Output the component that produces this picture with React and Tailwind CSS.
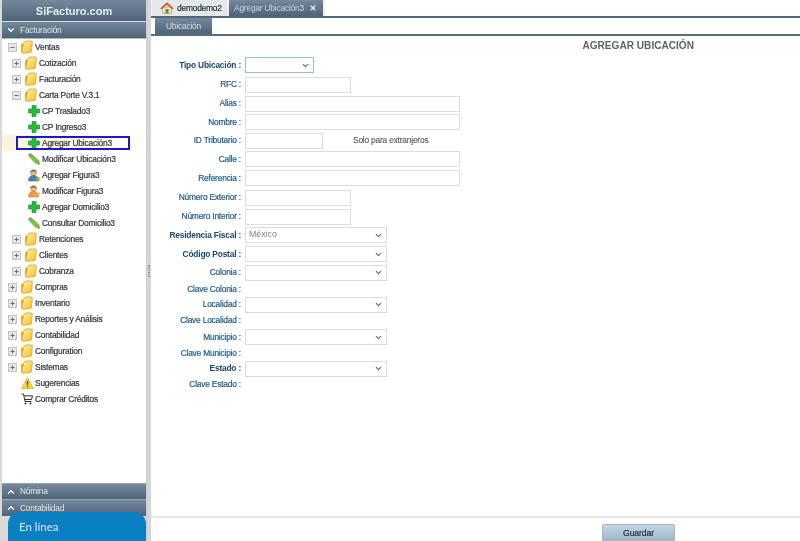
import React from 'react';
import { ChevronDown, ChevronUp, X } from 'lucide-react';

const Folder = () => (
    <svg width="13" height="14" viewBox="0 0 13 14" className="shrink-0">
        <defs>
            <linearGradient id="folderFill" x1="0" y1="0" x2="1" y2="1">
                <stop offset="0" stopColor="#fff1a8" />
                <stop offset="1" stopColor="#f0c030" />
            </linearGradient>
        </defs>
        <path d="M1 4.5 L5 2.5 L5.5 12.5 L1.5 13 Z" fill="#d9a520" />
        <path d="M3.5 3.5 Q4 1 6 1 L11.5 1 Q12.5 1 12.3 2.5 L11.5 11 Q11.3 12.5 10 12.7 L2.5 13.2 Q1.4 13.2 1.6 12 Z" fill="url(#folderFill)" stroke="#d9a520" strokeWidth="0.8" />
    </svg>
);

const Toggle = ({ open }) => (
    <svg width="9" height="9" viewBox="0 0 9 9" className="shrink-0">
        <rect x="0.5" y="0.5" width="8" height="8" fill="#e4e6e9" stroke="#bcc2c8" />
        <path d={open ? 'M2.5 4.5 H6.5' : 'M2.5 4.5 H6.5 M4.5 2.5 V6.5'} stroke="#6a7077" strokeWidth="1" />
    </svg>
);

const Plus = () => (
    <svg width="12" height="12" viewBox="0 0 12 12" className="shrink-0">
        <path d="M4 0.5 H8 V4 H11.5 V8 H8 V11.5 H4 V8 H0.5 V4 H4 Z" fill="#27b83c" stroke="#158a2a" strokeWidth="0.6" />
    </svg>
);

const Pencil = () => (
    <svg width="12" height="12" viewBox="0 0 12 12" className="shrink-0">
        <path d="M0.5 2 L2 0.5 L4 1.5 L11 8 L11.5 11.5 L8 10.5 L1.5 4 Z" fill="#7cc246" stroke="#4f9a2c" strokeWidth="0.6" />
        <path d="M0.5 2 L2 0.5 L3.5 2 L2 3.5 Z" fill="#d8738a" />
        <path d="M9 9 L11.5 11.5 L8 10.5 Z" fill="#c9a26b" />
    </svg>
);

const Figure = ({ edit }) => (
    <svg width="12" height="13" viewBox="0 0 12 13" className="shrink-0">
        <circle cx="5.5" cy="3.5" r="3" fill="#eab98c" stroke="#a9683a" strokeWidth="0.5" />
        <path d="M2.5 2.5 Q5.5 -0.5 8.5 2.5 L8 3 Q5.5 2 3 3 Z" fill={edit ? '#9c5f2a' : '#8a5a34'} />
        <path d="M0.5 12 Q0.5 6.5 5.5 6.5 Q10 6.5 10.5 12 Z" fill={edit ? '#e6a04a' : '#4a7fc0'} stroke={edit ? '#a8692a' : '#2d5b94'} strokeWidth="0.5" />
        {edit
            ? <path d="M7 12 L11.5 7.5" stroke="#e0b050" strokeWidth="1.6" />
            : <circle cx="9.5" cy="10" r="2" fill="#78c04a" stroke="#4b8f2c" strokeWidth="0.4" />}
    </svg>
);

const Warning = () => (
    <svg width="13" height="12" viewBox="0 0 13 12" className="shrink-0">
        <path d="M6.5 0.5 L12.5 11.5 H0.5 Z" fill="#f8d23c" stroke="#d9a520" strokeWidth="0.7" strokeLinejoin="round" />
        <path d="M6.5 4 V8 M6.5 9 V10.3" stroke="#5a3b00" strokeWidth="1.3" />
    </svg>
);

const Cart = () => (
    <svg width="12" height="12" viewBox="0 0 12 12" fill="none" className="shrink-0">
        <path d="M0.5 1 H2.5 L4 8.5 H10.5 M3 2.8 H11.5 L10.5 6.5 H3.7" stroke="#2f3338" strokeWidth="1" />
        <circle cx="4.5" cy="10.5" r="1" fill="#2f3338" />
        <circle cx="9.5" cy="10.5" r="1" fill="#2f3338" />
    </svg>
);

const Home = () => (
    <svg width="14" height="12" viewBox="0 0 14 12" className="shrink-0">
        <rect x="2.5" y="5" width="9" height="6.5" fill="#f3e3bd" stroke="#b08a4a" strokeWidth="0.5" />
        <rect x="5.5" y="7" width="3" height="4.5" fill="#4d9a3f" />
        <path d="M0.5 6.5 L7 0.5 L13.5 6.5 L12 6.8 L7 2.5 L2 6.8 Z" fill="#cf5a2c" stroke="#a8431d" strokeWidth="0.4" />
    </svg>
);

const tree = [
    { label: 'Ventas', depth: 0, toggle: 'open' },
    { label: 'Cotización', depth: 1, toggle: 'closed' },
    { label: 'Facturación', depth: 1, toggle: 'closed' },
    { label: 'Carta Porte V.3.1', depth: 1, toggle: 'open' },
    { label: 'CP Traslado3', icon: <Plus /> },
    { label: 'CP Ingreso3', icon: <Plus /> },
    { label: 'Agregar Ubicación3', icon: <Plus />, selected: true },
    { label: 'Modificar Ubicación3', icon: <Pencil /> },
    { label: 'Agregar Figura3', icon: <Figure /> },
    { label: 'Modificar Figura3', icon: <Figure edit /> },
    { label: 'Agregar Domicilio3', icon: <Plus /> },
    { label: 'Consultar Domicilio3', icon: <Pencil /> },
    { label: 'Retenciones', depth: 1, toggle: 'closed' },
    { label: 'Clientes', depth: 1, toggle: 'closed' },
    { label: 'Cobranza', depth: 1, toggle: 'closed' },
    { label: 'Compras', depth: 0, toggle: 'closed' },
    { label: 'Inventario', depth: 0, toggle: 'closed' },
    { label: 'Reportes y Análisis', depth: 0, toggle: 'closed' },
    { label: 'Contabilidad', depth: 0, toggle: 'closed' },
    { label: 'Configuration', depth: 0, toggle: 'closed' },
    { label: 'Sistemas', depth: 0, toggle: 'closed' },
    { label: 'Sugerencias', plain: <Warning /> },
    { label: 'Comprar Créditos', plain: <Cart /> },
];

const TreeRow = ({ item }) => {
    if (item.icon) {
        return (
            <div className={`h-4 flex items-center pl-[26px] ${item.selected ? 'bg-gradient-to-r from-[#fdf3dc] via-[#fdf6e6] to-white' : ''}`}>
                <div className={`flex items-center gap-[2px] ${item.selected ? 'relative' : ''}`}>
                    {item.selected && <div className="absolute left-[-12px] top-[-1px] w-[114px] h-[14px] border-2 border-[#1a1ac4]" />}
                    {item.icon}
                    <span>{item.label}</span>
                </div>
            </div>
        );
    }
    if (item.plain) {
        return (
            <div className="h-4 flex items-center pl-[19px]">
                <span className="w-[14px] shrink-0">{item.plain}</span>
                <span>{item.label}</span>
            </div>
        );
    }
    return (
        <div className={`h-4 flex items-center ${item.depth ? 'pl-[10px]' : 'pl-[6px]'}`}>
            <Toggle open={item.toggle === 'open'} />
            <span className="ml-[3px] mr-[2px]"><Folder /></span>
            <span>{item.label}</span>
        </div>
    );
};

const fields = [
    { label: 'Tipo Ubicación :', bold: true, input: 'tipo', h: 'h-[20px]' },
    { label: 'RFC :', input: 'short', h: 'h-[19px]' },
    { label: 'Alias :', input: 'long', h: 'h-[19px]' },
    { label: 'Nombre :', input: 'long', h: 'h-[18px]' },
    { label: 'ID Tributario :', input: 'id', h: 'h-[19px]' },
    { label: 'Calle :', input: 'long', h: 'h-[18px]' },
    { label: 'Referencia :', input: 'long', h: 'h-[20px]' },
    { label: 'Número Exterior :', input: 'short', h: 'h-[19px]' },
    { label: 'Número Interior :', input: 'short', h: 'h-[19px]' },
    { label: 'Residencia Fiscal :', bold: true, input: 'select', value: 'México', h: 'h-[18px]' },
    { label: 'Código Postal :', bold: true, input: 'select', h: 'h-[20px]' },
    { label: 'Colonia :', input: 'select', h: 'h-[17px]' },
    { label: 'Clave Colonia :', h: 'h-[16px]' },
    { label: 'Localidad :', input: 'select', h: 'h-[15px]' },
    { label: 'Clave Localidad :', h: 'h-[17px]' },
    { label: 'Municipio :', input: 'select', h: 'h-[16px]' },
    { label: 'Clave Municipio :', h: 'h-[16px]' },
    { label: 'Estado :', bold: true, input: 'select', h: 'h-[15px]' },
    { label: 'Clave Estado :', h: 'h-[17px]' },
];

const boxClass = 'h-[16px] bg-white border border-[#dcdcdc]';

const SelectBox = ({ width, value, focus }) => (
    <div className={`${width} h-[16px] bg-white border flex items-center justify-between pl-[3px] pr-[3px] ${focus ? 'border-[#8fc0e0]' : 'border-[#dcdcdc]'}`}>
        <span className="text-[8.8px] text-[#808080]">{value}</span>
        <ChevronDown size={9} strokeWidth={3} className="text-[#5b6b7a]" />
    </div>
);

const Field = ({ field }) => (
    <div className={`${field.h} flex items-center`}>
        <div className={`w-[90px] text-right text-[8.4px] tracking-[-0.2px] whitespace-nowrap ${field.bold ? 'font-bold text-[#17466e]' : 'text-[#1e5a8a] [-webkit-text-stroke:0.2px]'}`}>
            {field.label}
        </div>
        <div className="ml-[4px] flex items-center">
            {field.input === 'tipo' && <SelectBox width="w-[69px]" focus />}
            {field.input === 'select' && <SelectBox width="w-[142px]" value={field.value} />}
            {field.input === 'short' && <div className={`${boxClass} w-[106px]`} />}
            {field.input === 'long' && <div className={`${boxClass} w-[215px]`} />}
            {field.input === 'id' && (
                <>
                    <div className={`${boxClass} w-[78px]`} />
                    <span className="ml-[30px] text-[8.4px] tracking-[-0.2px] text-[#555] [-webkit-text-stroke:0.1px]">Solo para extranjeros</span>
                </>
            )}
        </div>
    </div>
);

const BarGradient = 'bg-gradient-to-b from-[#75889c] to-[#4f6478]';

export default function App() {
    return (
        <div className="w-[800px] h-[541px] overflow-hidden bg-white flex font-['Liberation_Sans',Arial,sans-serif] relative blur-[0.3px]">
            <aside className="w-[147px] h-full shrink-0 pl-[2px] flex flex-col bg-[#d9d9d9] border-r border-[#c6ccd2]">
                <div className={`h-[21px] shrink-0 pt-[1px] ${BarGradient} flex items-center justify-center text-[11px] font-bold text-[#e6ebf0]`}>
                    SiFacturo.com
                </div>
                <div className={`h-[16px] mt-[1px] shrink-0 ${BarGradient} flex items-center pl-[4px] gap-[4px] text-[8.4px] tracking-[-0.2px] text-[#dfe5ea]`}>
                    <ChevronDown size={10} strokeWidth={3} className="text-white" />
                    Facturación
                </div>
                <div className="h-[445px] shrink-0 bg-white text-[8.4px] tracking-[-0.2px] text-[#30353b] border-t border-[#aeb8c2] [-webkit-text-stroke:0.2px]">
                    {tree.map((item) => <TreeRow key={item.label} item={item} />)}
                </div>
                <div className={`h-[16px] shrink-0 ${BarGradient} flex items-center pl-[4px] gap-[4px] text-[8.4px] tracking-[-0.2px] text-[#dfe5ea] border-t border-[#9aa8b6]`}>
                    <ChevronUp size={10} strokeWidth={3} className="text-white" />
                    Nómina
                </div>
                <div className={`h-[17px] shrink-0 ${BarGradient} flex items-center pl-[4px] gap-[4px] text-[8.4px] tracking-[-0.2px] text-[#dfe5ea] border-t border-[#9aa8b6]`}>
                    <ChevronUp size={10} strokeWidth={3} className="text-white" />
                    Contabilidad
                </div>
            </aside>

            <div className="w-[4px] shrink-0 bg-[#d4d6d9] flex items-center justify-center">
                <div className="w-[2px] h-[12px] border-x border-dotted border-[#8a8f96]" />
            </div>

            <main className="flex-1 min-w-0 flex flex-col">
                <div className="h-[16px] shrink-0 flex items-end gap-[2px] bg-[#eef0f2] pl-[1px] text-[8.4px] tracking-[-0.2px]">
                    <div className="h-[16px] w-[75px] bg-[#e4e8ec] flex items-center gap-[3px] pl-[8px] text-[#2b3036] [-webkit-text-stroke:0.2px]">
                        <Home />
                        demodemo2
                    </div>
                    <div className={`h-[16px] w-[94px] ${BarGradient} flex items-center pl-[5px] text-[#cdd6de] rounded-t-[1px]`}>
                        Agregar Ubicación3
                        <X size={8} strokeWidth={3.5} className="ml-[5px] text-[#eef2f5]" />
                    </div>
                    <div className="flex-1 h-full bg-white" />
                </div>
                <div className="h-[2px] shrink-0 bg-[#50667a]" />
                <div className="h-[16px] shrink-0 flex bg-white pl-[4px]">
                    <div className={`w-[57px] ${BarGradient} flex items-center justify-center text-[8.4px] tracking-[-0.2px] text-[#d8dfe5]`}>
                        Ubicación
                    </div>
                </div>
                <div className="h-[2px] shrink-0 bg-[#5a6d7f]" />

                <section className="flex-1 min-h-0 flex flex-col">
                    <div className="h-[19px] shrink-0 flex items-center justify-end pr-[106px] text-[10.1px] font-bold text-[#5f6368]">
                        AGREGAR UBICACIÓN
                    </div>
                    {fields.map((field) => <Field key={field.label} field={field} />)}
                </section>

                <footer className="h-[25px] shrink-0 border-t-2 border-[#e6e6e6] flex justify-end items-end pr-[125px]">
                    <button className="w-[73px] h-[17px] pt-[1px] rounded-t-[2px] bg-gradient-to-b from-[#c5d6e6] to-[#9db6cc] border border-[#a6b6c4] text-[8.6px] tracking-[-0.1px] text-[#22303c] [-webkit-text-stroke:0.2px]">
                        Guardar
                    </button>
                </footer>
            </main>

            <div className="absolute left-[8px] bottom-0 w-[138px] h-[29px] bg-[#0a80c2] rounded-t-[12px] flex items-center pl-[11px] text-[11.5px] text-[#dcebf5] font-['Lato',sans-serif]">
                En línea
            </div>
        </div>
    );
}
